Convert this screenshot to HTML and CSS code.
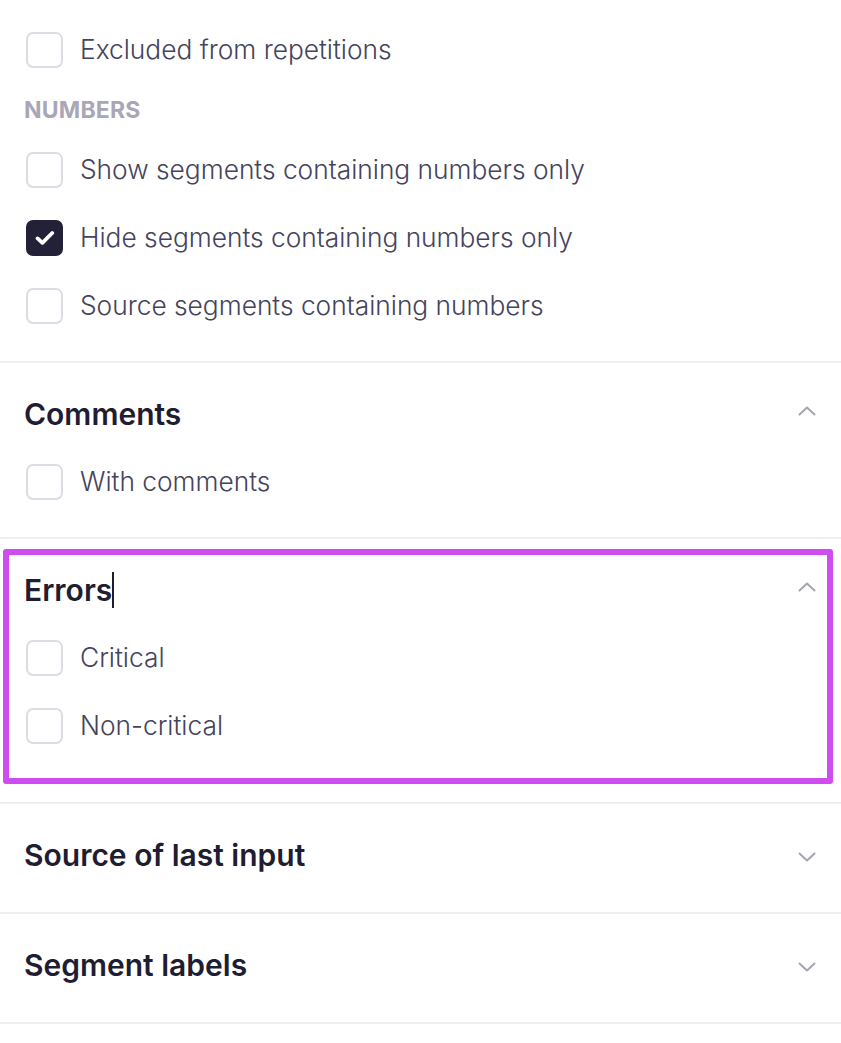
FILE: index.html
```html
<!DOCTYPE html>
<html lang="en">
<head>
<meta charset="utf-8">
<title>Filters</title>
<link rel="stylesheet" href="styles.css">
</head>
<body>
<div class="panel">
  <section class="section section-top">
    <div class="options">
      <div class="option"><span class="box"></span></div>
      <label class="option"><span class="box"></span><span class="text">Excluded from repetitions</span></label>
    </div>
    <div class="group-label">NUMBERS</div>
    <div class="options">
      <label class="option"><span class="box"></span><span class="text">Show segments containing numbers only</span></label>
      <label class="option"><span class="box checked"><svg width="20" height="16" viewBox="0 0 20 16"><path d="M2.6 8.4 L7.4 12.8 L17.2 3" fill="none" stroke="#fff" stroke-width="3.8" stroke-linecap="round" stroke-linejoin="round"/></svg></span><span class="text">Hide segments containing numbers only</span></label>
      <label class="option"><span class="box"></span><span class="text">Source segments containing numbers</span></label>
    </div>
  </section>

  <section class="section">
    <div class="header">
      <h2 class="title">Comments</h2>
      <svg class="chev up" width="18" height="10" viewBox="0 0 18 10"><path d="M1.5 8.5 L9 1.5 L16.5 8.5" fill="none" stroke="#a6a4b3" stroke-width="2" stroke-linecap="round" stroke-linejoin="round"/></svg>
    </div>
    <div class="options">
      <label class="option"><span class="box"></span><span class="text">With comments</span></label>
    </div>
  </section>

  <section class="section section-errors">
    <div class="highlight"></div>
    <div class="header">
      <h2 class="title">Errors<span class="caret"></span></h2>
      <svg class="chev up" width="18" height="10" viewBox="0 0 18 10"><path d="M1.5 8.5 L9 1.5 L16.5 8.5" fill="none" stroke="#a6a4b3" stroke-width="2" stroke-linecap="round" stroke-linejoin="round"/></svg>
    </div>
    <div class="options">
      <label class="option"><span class="box"></span><span class="text">Critical</span></label>
      <label class="option"><span class="box"></span><span class="text">Non-critical</span></label>
    </div>
  </section>

  <section class="section collapsed">
    <div class="header">
      <h2 class="title">Source of last input</h2>
      <svg class="chev down" width="18" height="10" viewBox="0 0 18 10"><path d="M1.5 1.5 L9 8.5 L16.5 1.5" fill="none" stroke="#a6a4b3" stroke-width="2" stroke-linecap="round" stroke-linejoin="round"/></svg>
    </div>
  </section>

  <section class="section collapsed">
    <div class="header">
      <h2 class="title">Segment labels</h2>
      <svg class="chev down" width="18" height="10" viewBox="0 0 18 10"><path d="M1.5 1.5 L9 8.5 L16.5 1.5" fill="none" stroke="#a6a4b3" stroke-width="2" stroke-linecap="round" stroke-linejoin="round"/></svg>
    </div>
  </section>
</div>
</body>
</html>
```

FILE: styles.css
```css
html, body {
  margin: 0;
  padding: 0;
  background: #ffffff;
}

body {
  font-family: Inter, "Noto Sans", sans-serif;
  overflow: hidden;
}

.panel {
  width: 841px;
  margin-top: -36px;
}

.section {
  position: relative;
  padding: 35px 24px 37px 24px;
  border-bottom: 2px solid #efeff2;
  display: flex;
  flex-direction: column;
}

.section-top {
  padding-top: 0;
}

.section-errors {
  padding-bottom: 58px;
}

.collapsed {
  padding-bottom: 41px;
}

.options {
  display: flex;
  flex-direction: column;
  gap: 32px;
}

.header + .options {
  margin-top: 34px;
}

.option {
  display: flex;
  align-items: center;
  gap: 17px;
  height: 36px;
  padding-left: 2px;
}

.box {
  box-sizing: border-box;
  width: 37px;
  height: 36px;
  border: 2px solid #dddce4;
  border-radius: 7px;
  flex: none;
  display: flex;
  align-items: center;
  justify-content: center;
  background: #fff;
}

.box.checked {
  background: #232138;
  border-color: #232138;
}

.text {
  font-size: 26.3px;
  font-weight: 300;
  color: #45435c;
  line-height: 36px;
}

.group-label {
  margin: 30px 0;
  font-size: 23px;
  line-height: 24px;
  font-weight: 700;
  color: #a9a7b5;
  letter-spacing: 0.2px;
}

.header {
  display: flex;
  align-items: center;
  justify-content: space-between;
  height: 32px;
}

.title {
  margin: 0;
  font-size: 30px;
  line-height: 32px;
  font-weight: 600;
  color: #1f1d32;
  display: flex;
  align-items: center;
}

.chev {
  margin-right: 1px;
}

.chev.up {
  margin-top: -6px;
}

.chev.down {
  margin-top: 3px;
}

.caret {
  display: inline-block;
  width: 2px;
  height: 36px;
  background: #1f1d32;
}

.highlight {
  position: absolute;
  left: 3px;
  top: 10px;
  width: 830px;
  height: 235px;
  box-sizing: border-box;
  border: 6px solid #cf4cf1;
  border-radius: 3px;
  pointer-events: none;
}
```
